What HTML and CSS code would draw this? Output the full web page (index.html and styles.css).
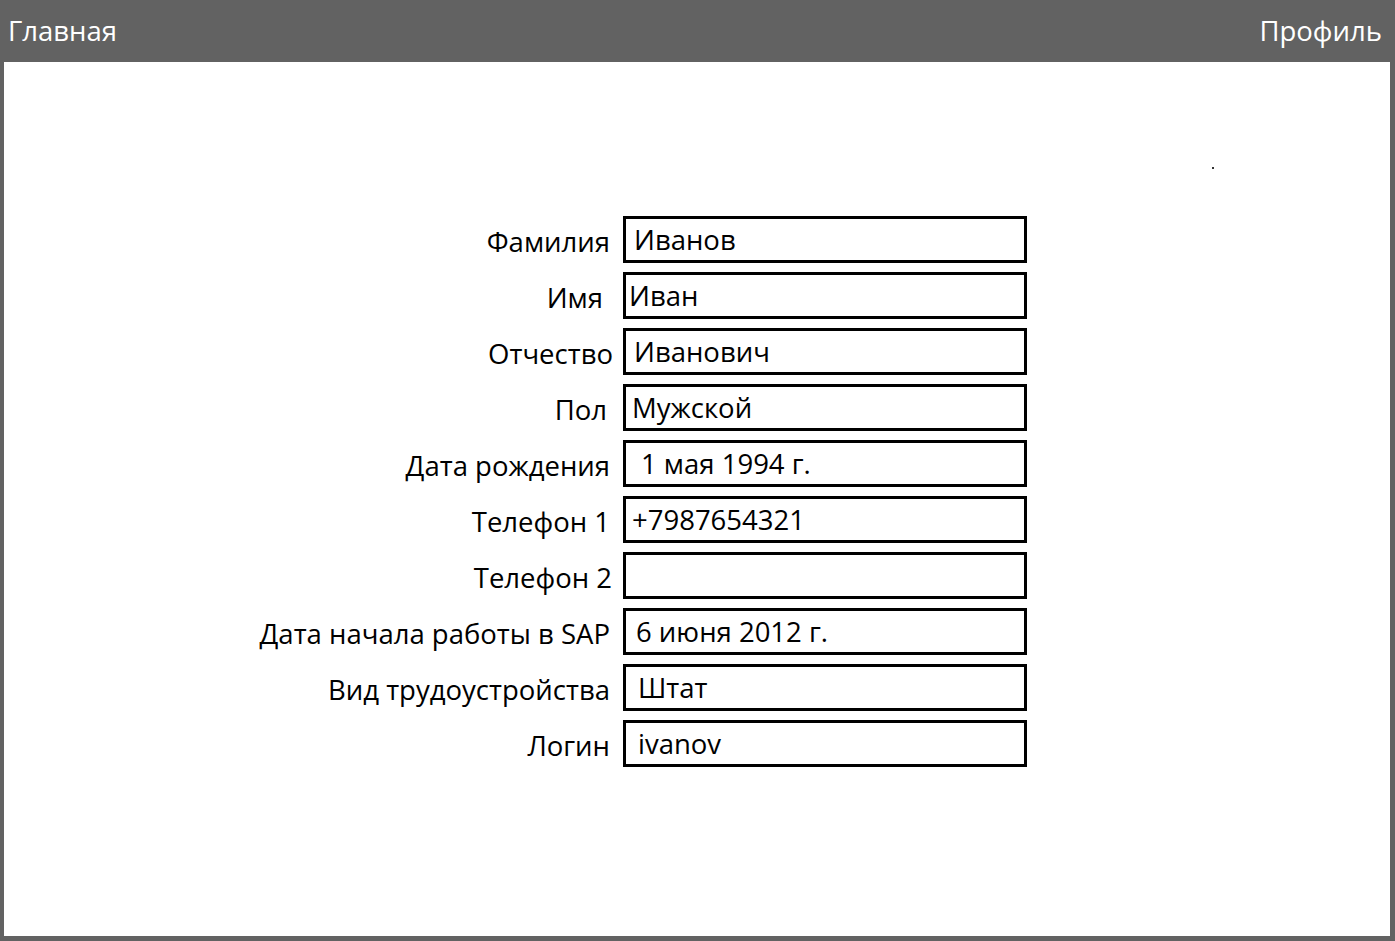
FILE: index.html
```html
<!DOCTYPE html>
<html lang="ru">
<head>
<meta charset="utf-8">
<title>Профиль</title>
<link rel="stylesheet" href="styles.css">
</head>
<body>
<header class="topbar">
  <span class="nav-link">Главная</span>
  <span class="nav-link">Профиль</span>
</header>
<main class="page">
  <span class="speck"></span>
  <div class="form">
    <div class="label">Фамилия</div><div class="field v1">Иванов</div>
    <div class="label l-imya">Имя</div><div class="field v2">Иван</div>
    <div class="label l-otch">Отчество</div><div class="field v1">Иванович</div>
    <div class="label l-pol">Пол</div><div class="field v3">Мужской</div>
    <div class="label">Дата рождения</div><div class="field v4">1 мая 1994 г.</div>
    <div class="label">Телефон 1</div><div class="field v3">+7987654321</div>
    <div class="label l-tel2">Телефон 2</div><div class="field"></div>
    <div class="label">Дата начала работы в SAP</div><div class="field v5">6 июня 2012 г.</div>
    <div class="label">Вид трудоустройства</div><div class="field v6">Штат</div>
    <div class="label">Логин</div><div class="field v6">ivanov</div>
  </div>
</main>
</body>
</html>
```

FILE: styles.css
```css
html, body {
  margin: 0;
  padding: 0;
}
body {
  background: #626262;
  font-family: "Open Sans", "Noto Sans", sans-serif;
  height: 941px;
  display: flex;
  flex-direction: column;
}
.topbar {
  height: 62px;
  display: flex;
  justify-content: space-between;
  align-items: center;
  padding: 0 13px 2px 8px;
  box-sizing: border-box;
  color: #ffffff;
  font-size: 27.5px;
}
.page {
  flex: 1;
  background: #ffffff;
  margin: 0 5px 5px 4px;
  position: relative;
  padding-top: 154px;
}
.speck {
  position: absolute;
  left: 1208px;
  top: 105px;
  width: 2px;
  height: 2px;
  background: #333;
}
.form {
  display: grid;
  grid-template-columns: 606px 404px;
  column-gap: 13px;
  row-gap: 9px;
  color: #000;
  font-size: 27.5px;
}
.label {
  text-align: right;
  align-self: center;
  padding-top: 5px;
  line-height: 1;
}
.field {
  height: 47px;
  box-sizing: border-box;
  border: 3px solid #000;
  padding-left: 8px;
  display: flex;
  align-items: center;
  line-height: 1;
}
.l-imya { padding-right: 7px; }
.l-otch { margin-right: -3px; }
.l-pol { padding-right: 3px; }
.l-tel2 { margin-right: -2px; }
.v1 { padding-left: 8px; }
.v2 { padding-left: 3px; }
.v3 { padding-left: 6px; }
.v4 { padding-left: 15px; }
.v5 { padding-left: 10px; }
.v6 { padding-left: 12px; }
```
